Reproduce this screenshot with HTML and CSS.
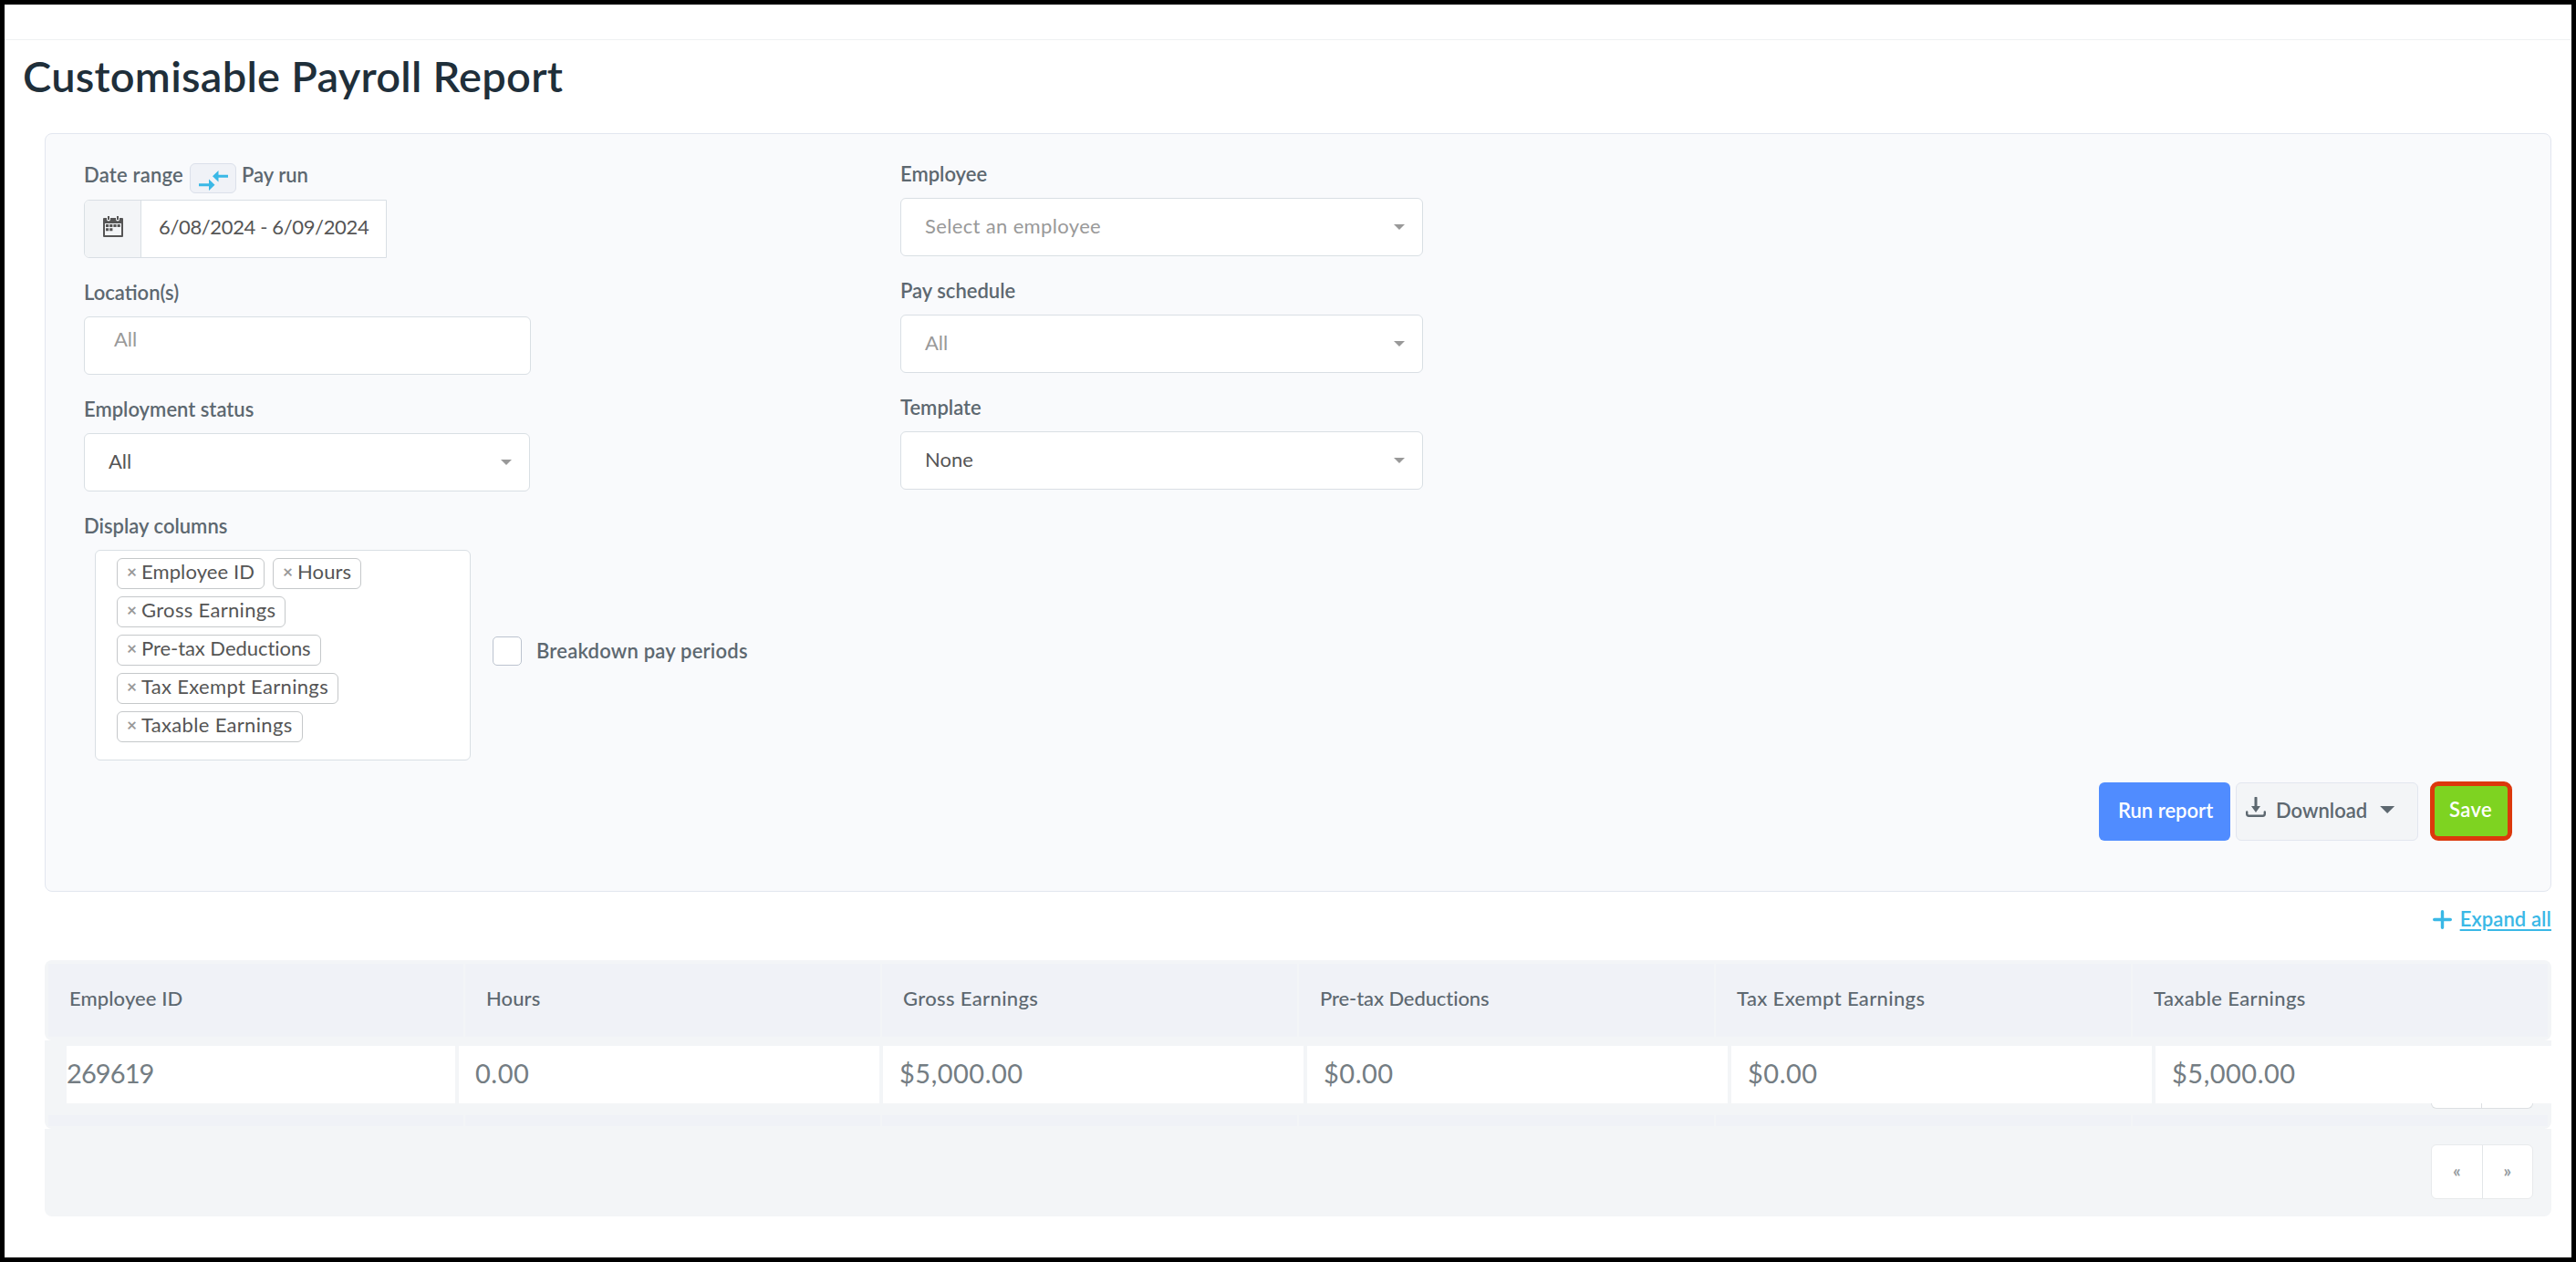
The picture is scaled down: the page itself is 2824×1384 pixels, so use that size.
FILE: index.html
```
<!DOCTYPE html>
<html lang="en">
<head>
<meta charset="utf-8">
<title>Customisable Payroll Report</title>
<link rel="stylesheet" href="styles.css">
</head>
<body>
<div class="frame">
  <div class="topbar"></div>
  <h1 class="title"><span>Customisable Payroll Report</span></h1>

  <section class="panel">
    <div class="filters">
      <div class="col">
        <div class="range-row">
          <span class="label label-range">Date range</span>
          <button class="toggle" aria-label="Switch">
            <svg width="32" height="22" viewBox="0 0 32 22"><g fill="#3ab8e6"><path d="M15 6.300 21.500 0v4.800H32v3H21.500v4.800z"/><path d="M17.500 15.800 11 9.500v4.800H0v3h11V22z"/></g></svg>
          </button>
          <span class="label">Pay run</span>
        </div>
        <div class="date-input">
          <span class="addon">
            <svg width="22" height="23" viewBox="0 0 22 23"><path fill="#555" fill-rule="evenodd" d="M1 2h3v1.500a2 2 0 0 0 4 0V2h6v1.500a2 2 0 0 0 4 0V2h3a1 1 0 0 1 1 1v19a1 1 0 0 1-1 1H1a1 1 0 0 1-1-1V3a1 1 0 0 1 1-1zM2 8v13h18V8z"/><path fill="#555" d="M5 0h2v4H5zM15 0h2v4h-2zM3 9h3.200v3H3zM7.200 9h3.200v3H7.200zM11.400 9h3.200v3h-3.200zM15.600 9h3.200v3h-3.200zM3 13.200h3.200v3H3zM7.200 13.200h3.200v3H7.200z"/></svg>
          </span>
          <span class="date-value"><span class="t-date">6/08/2024 - 6/09/2024</span></span>
        </div>
        <div class="field">
          <span class="label">Location(s)</span>
          <div class="box box-multi"><span class="muted">All</span></div>
        </div>
        <div class="field">
          <span class="label">Employment status</span>
          <div class="box box-status"><span>All</span><i class="caret"></i></div>
        </div>
        <div class="field">
          <span class="label">Display columns</span>
          <div class="columns-row">
            <div class="chips">
              <span class="chip"><b>×</b><span>Employee ID</span></span>
              <span class="chip"><b>×</b><span>Hours</span></span>
              <span class="chip loose"><b>×</b><span>Gross Earnings</span></span>
              <span class="chip tight"><b>×</b><span>Pre-tax Deductions</span></span>
              <span class="chip loose"><b>×</b><span>Tax Exempt Earnings</span></span>
              <span class="chip loose"><b>×</b><span>Taxable Earnings</span></span>
            </div>
            <div class="check"><i class="checkbox"></i><span class="label">Breakdown pay periods</span></div>
          </div>
        </div>
      </div>
      <div class="col col-right">
        <div class="field">
          <span class="label">Employee</span>
          <div class="box"><span class="muted t-wide">Select an employee</span><i class="caret"></i></div>
        </div>
        <div class="field">
          <span class="label">Pay schedule</span>
          <div class="box"><span class="muted">All</span><i class="caret"></i></div>
        </div>
        <div class="field">
          <span class="label">Template</span>
          <div class="box"><span>None</span><i class="caret"></i></div>
        </div>
      </div>
    </div>
    <div class="actions">
      <button class="btn btn-run"><span>Run report</span></button>
      <button class="btn btn-download">
        <svg width="22" height="22" viewBox="0 0 22 22"><path fill="#5d6870" d="M9.500 1a1.500 1.500 0 0 1 3 0v9h3.500l-5 7-5-7h3.500z"/><path fill="none" stroke="#5d6870" stroke-width="2.400" stroke-linecap="round" d="M1.200 16.500v2q0 2.200 2.200 2.200h15.200q2.200 0 2.200-2.200v-2"/></svg>
        <span>Download</span><i class="caret caret-lg"></i>
      </button>
      <button class="btn btn-save"><span>Save</span></button>
    </div>
  </section>

  <div class="expand">
    <svg width="21" height="21" viewBox="0 0 21 21"><path fill="none" stroke="#3ab8e6" stroke-width="3.400" stroke-linecap="round" d="M10.500 1.700v17.600M1.700 10.500h17.600"/></svg>
    <a>Expand all</a>
  </div>

  <div class="table">
    <div class="thead">
      <div class="th"><span>Employee ID</span></div>
      <div class="th"><span>Hours</span></div>
      <div class="th th-loose"><span>Gross Earnings</span></div>
      <div class="th tight"><span>Pre-tax Deductions</span></div>
      <div class="th th-loose"><span>Tax Exempt Earnings</span></div>
      <div class="th th-loose"><span>Taxable Earnings</span></div>
    </div>
    <div class="tbody">
      <div class="row">
        <div class="td td-id"><span>269619</span></div>
        <div class="td"><span>0.00</span></div>
        <div class="td"><span>$5,000.00</span></div>
        <div class="td"><span>$0.00</span></div>
        <div class="td"><span>$0.00</span></div>
        <div class="td"><span>$5,000.00</span></div>
      </div>
      <div class="pager-edge"><i></i><i></i></div>
      <div class="strip"><i></i><i></i><i></i><i></i><i></i><i></i></div>
    </div>
    <div class="tfoot">
      <div class="pager"><span>«</span><span>»</span></div>
    </div>
  </div>
</div>
</body>
</html>
```
FILE: styles.css
```
* { box-sizing: border-box; }
body {
  margin: 0;
  background: #fff;
  color: #555;
  font-family: Lato, "Open Sans", sans-serif;
  font-size: 22px;
  line-height: 28px;
}
i { font-style: normal; display: block; }
svg { display: block; flex: none; }
button { font: inherit; margin: 0; padding: 0; }

.frame {
  width: 2824px;
  height: 1384px;
  border: 5px solid #000;
  overflow: hidden;
}
.topbar { height: 39px; border-bottom: 1px solid #eff1f2; }
.title {
  margin: 0;
  height: 102px;
  padding: 9px 0 0 20px;
  font-size: 47px;
  font-weight: 600;
  line-height: 60px;
  letter-spacing: 0.25px;
  color: #1f2f3a;
}

/* Filter panel */
.panel {
  width: 2748px;
  height: 832px;
  margin-left: 44px;
  padding: 30px 42px 0;
  border: 1px solid #e2e6ef;
  border-radius: 8px;
  background: #f9fafc;
}
.filters { display: grid; grid-template-columns: 895px 573px; height: 657px; }
.label {
  display: block;
  font-weight: 600;
  color: #5d6870;
  white-space: nowrap;
}
.range-row { display: flex; height: 42px; }
.range-row .label { padding-top: 1px; }
.label-range { letter-spacing: 0.2px; }
.toggle {
  width: 51px;
  height: 33px;
  margin: 2px 6px 0 7px;
  padding: 5px 0 0 9px;
  border: 1px solid #dbe0ea;
  border-radius: 6px;
  background: #f0f2f7;
}
.date-input {
  display: flex;
  width: 332px;
  height: 64px;
  border: 1px solid #d9dfe4;
  border-radius: 6px 0 0 6px;
  background: #fff;
}
.addon {
  width: 62px;
  padding: 17px 0 0 20px;
  border-right: 1px solid #d9dfe4;
  border-radius: 5px 0 0 5px;
  background: #f3f5f7;
}
.date-value { padding: 15px 0 0 19px; }
.t-date { letter-spacing: -0.36px; }
.field { padding-top: 24px; }
.col-right .field:first-child { padding-top: 1px; }
.field > .label { margin-bottom: 12px; }
.col-right { margin-top: -1px; }
.box {
  display: flex;
  justify-content: space-between;
  height: 64px;
  padding: 16px 19px 0 26px;
  border: 1px solid #d9dfe4;
  border-radius: 6px;
  background: #fff;
}
.box-multi { width: 490px; padding: 10px 0 0 32px; }
.box-status { width: 489px; }
.muted { color: #999; }
.t-wide { letter-spacing: 0.35px; }
.caret {
  width: 12px;
  height: 6px;
  margin-top: 12px;
  background: #999;
  clip-path: polygon(0 0, 100% 0, 50% 100%);
}
.columns-row { display: flex; padding-left: 12px; }
.chips {
  display: flex;
  flex-wrap: wrap;
  align-content: flex-start;
  gap: 8px 9px;
  width: 412px;
  height: 231px;
  padding: 8px 60px 0 23px;
  border: 1px solid #d9dfe4;
  border-radius: 6px;
  background: #fff;
}
.chip {
  display: flex;
  height: 34px;
  padding: 0 10px;
  border: 1px solid #c5c8ca;
  border-radius: 6px;
  letter-spacing: 0.1px;
}
.chip.loose { letter-spacing: 0.32px; }
.tight { letter-spacing: -0.05px; }
.chip b {
  width: 16px;
  font-size: 19px;
  font-weight: 700;
  letter-spacing: 0;
  color: #999;
}
.check { display: flex; align-items: center; height: 221px; margin-left: 24px; }
.checkbox {
  width: 32px;
  height: 32px;
  margin-right: 16px;
  border: 1px solid #bcc3cf;
  border-radius: 5px;
  background: #fff;
}
.check .label { letter-spacing: 0.2px; }

/* Buttons */
.actions { display: flex; height: 66px; justify-content: flex-end; }
.btn {
  display: flex;
  height: 64px;
  border: 0;
  border-radius: 6px;
  font-weight: 600;
  line-height: 28px;
  white-space: nowrap;
}
.btn-run { width: 144px; margin-top: 24px; padding: 17px 0 0 21px; background: #508cff; color: #fff; }
.btn-download {
  width: 200px;
  margin: 24px 13px 0 6px;
  padding: 16px 0 0 10px;
  border: 1px solid #e2e6ef;
  background: #f3f5f7;
  color: #5d6870;
}
.btn-download span { margin-left: 11px; }
.btn-download svg { margin-top: -1px; }
.caret-lg { width: 16px; height: 8px; margin: 9px 0 0 14px; background: #5d6870; }
.btn-save {
  width: 90px;
  height: 65px;
  margin-top: 23px;
  padding: 12px 0 0 16px;
  border: 5px solid #dc380c;
  border-radius: 9px;
  background: #7ed321;
  color: #fff;
  letter-spacing: 0.4px;
}

.expand {
  display: flex;
  justify-content: flex-end;
  height: 75px;
  padding: 16px 22px 0 0;
  color: #3ab8e6;
}
.expand svg { margin: 4px 9px 0 0; }
.expand a {
  font-weight: 600;
  letter-spacing: 0.1px;
  text-decoration: underline;
  text-decoration-thickness: 2px;
  text-underline-offset: 3px;
}

/* Results table */
.table { width: 2748px; margin-left: 44px; }
.thead {
  display: grid;
  grid-template-columns: repeat(6, 1fr);
  column-gap: 2px;
  height: 88px;
  padding: 4px;
  border-radius: 8px;
  background: #f3f5f7;
}
.th {
  padding: 24px 0 0 23px;
  background: #f0f2f7;
  font-weight: 500;
  color: #5d6870;
  letter-spacing: 0.1px;
}
.th.th-loose { letter-spacing: 0.35px; }
.th.tight { letter-spacing: -0.1px; }
.tbody { height: 97px; padding-top: 6px; border-radius: 0 0 8px 8px; background: #f3f5f7; }
.row {
  display: grid;
  grid-template-columns: 426px repeat(4, 461px) 1fr;
  column-gap: 4px;
  height: 63px;
  margin-left: 24px;
}
.td {
  padding: 16px 0 0 18px;
  background: #fff;
  color: #747d83;
  font-size: 29px;
  line-height: 28px;
  letter-spacing: 0.5px;
}
.td-id { padding-left: 0; letter-spacing: -0.9px; }
.pager-edge { display: flex; justify-content: flex-end; height: 13px; padding: 0 20px 7px 0; }
.pager-edge i {
  width: 56px;
  background: #fff;
  border: solid #dcdfe2;
  border-width: 0 1px 1px 0;
  border-radius: 0 0 6px 0;
}
.pager-edge i:first-child { border-left-width: 1px; border-radius: 0 0 0 6px; }
.strip {
  display: grid;
  grid-template-columns: repeat(6, 1fr);
  column-gap: 2px;
  height: 12px;
  padding: 0 4px;
}
.strip i { background: #f0f2f7; }
.tfoot {
  display: flex;
  justify-content: flex-end;
  height: 96px;
  padding: 17px 20px 0 0;
  border-radius: 0 0 8px 8px;
  background: #f3f5f7;
}
.pager {
  display: flex;
  width: 112px;
  height: 60px;
  border: 1px solid #e8eaec;
  border-radius: 6px;
  background: #fff;
  color: #959b9f;
  font-size: 19px;
  font-weight: 700;
  line-height: 56px;
  text-align: center;
}
.pager span { flex: 1; }
.pager span:first-child { border-right: 1px solid #e3e6e8; }
```
